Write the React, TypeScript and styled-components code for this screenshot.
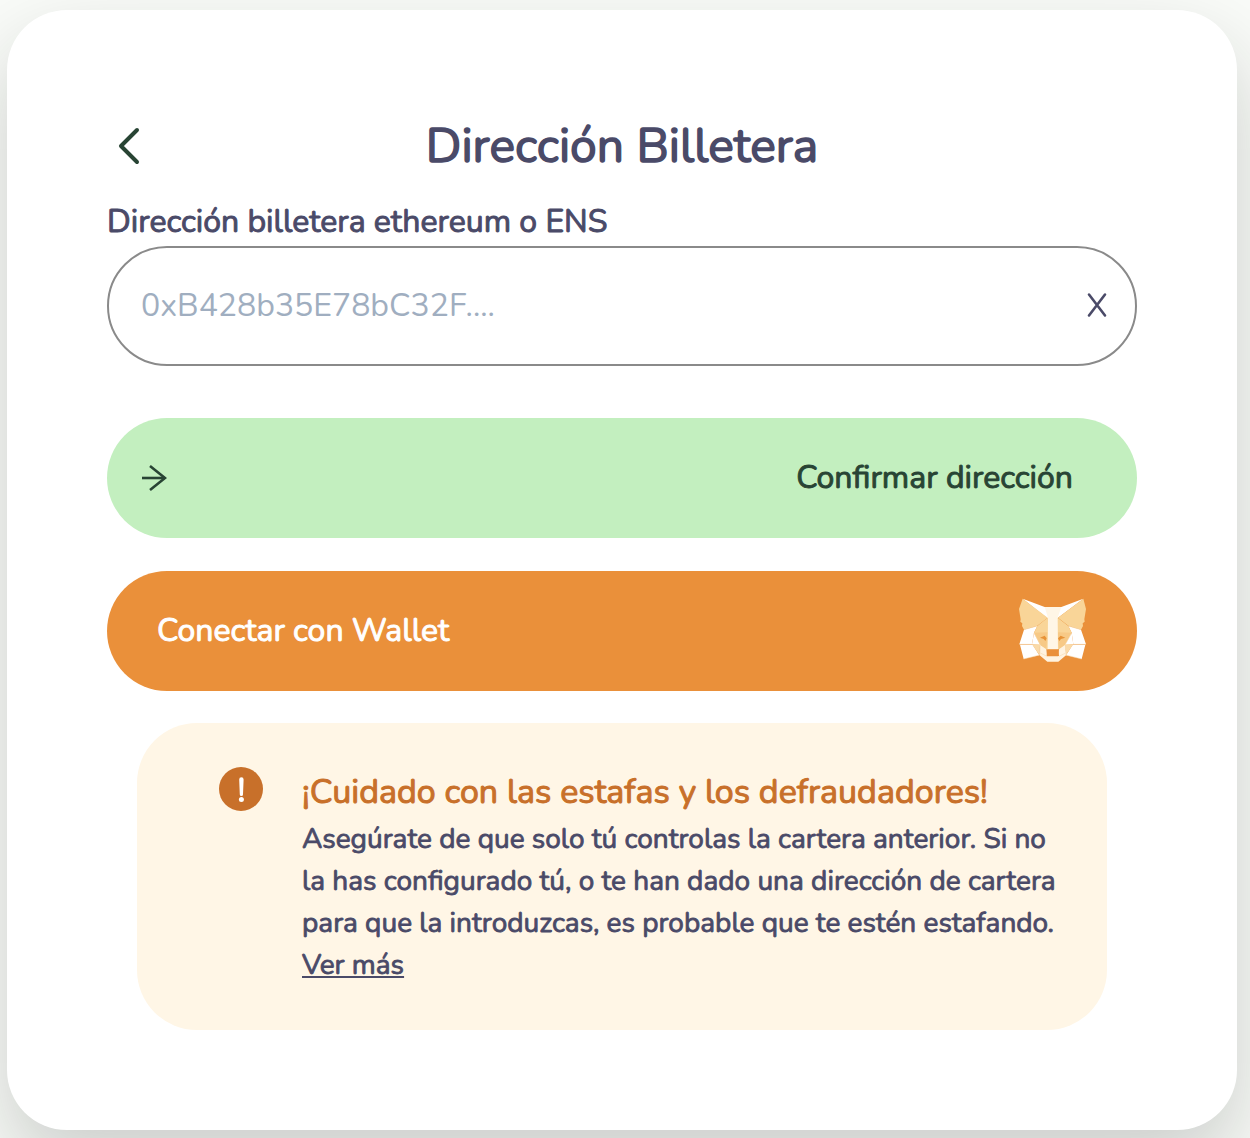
import React, { useState } from "react";
import styled, { createGlobalStyle } from "styled-components";

const GlobalStyle = createGlobalStyle`
  *, *::before, *::after { box-sizing: border-box; }
  body {
    margin: 0;
    background: #f9fbf8;
    color: #4a4a68;
    font-family: Nunito, Lato, "Open Sans", sans-serif;
    font-weight: 400;
  }
  button, input { font: inherit; }
`;

const textStroke = "0.03em currentColor";

const Page = styled.main`
  padding: 10px 13px 8px 7px;
  overflow: hidden;
`;

const Card = styled.section`
  padding: 100px;
  border-radius: 60px;
  background: #fff;
  box-shadow: 0 36px 80px rgba(24, 30, 24, 0.2);
`;

const Header = styled.header`
  display: grid;
  grid-template-columns: 44px 1fr 44px;
  align-items: center;
  height: 72px;
`;

const BackButton = styled.button`
  display: flex;
  justify-content: center;
  padding: 0;
  border: 0;
  background: none;
  color: #284434;
  cursor: pointer;
`;

const Title = styled.h1`
  margin: 0;
  font-size: 48px;
  line-height: 72px;
  font-weight: 400;
  text-align: center;
  -webkit-text-stroke: ${textStroke};
`;

const Form = styled.form`
  display: flex;
  flex-direction: column;
`;

const Label = styled.label`
  margin-top: 16px;
  font-size: 32px;
  line-height: 48px;
  -webkit-text-stroke: ${textStroke};
`;

const Field = styled.div`
  display: flex;
  align-items: center;
  height: 120px;
  padding: 0 28px 0 32px;
  border: 2px solid #8a8a8a;
  border-radius: 60px;
`;

const AddressInput = styled.input`
  flex: 1;
  min-width: 0;
  padding: 0;
  border: 0;
  outline: 0;
  background: none;
  color: #4a4a68;
  font-size: 32px;
  line-height: 48px;
  &::placeholder { color: #a0aec0; opacity: 1; }
`;

const ClearButton = styled.button`
  display: flex;
  padding: 0;
  border: 0;
  background: none;
  color: #4a4a68;
  cursor: pointer;
`;

const PillButton = styled.button<{ $tone: "confirm" | "wallet" }>`
  display: flex;
  align-items: center;
  justify-content: space-between;
  height: 120px;
  margin-top: ${(p) => (p.$tone === "confirm" ? "52px" : "33px")};
  padding: ${(p) => (p.$tone === "confirm" ? "0 64px 0 34px" : "0 50px")};
  border: 0;
  border-radius: 60px;
  background: ${(p) => (p.$tone === "confirm" ? "#c3efbf" : "#ea903a")};
  color: ${(p) => (p.$tone === "confirm" ? "#284434" : "#fff")};
  font-size: 32px;
  line-height: 48px;
  -webkit-text-stroke: ${textStroke};
  cursor: pointer;
`;

const Warning = styled.aside`
  display: flex;
  align-items: flex-start;
  gap: 39px;
  margin: 32px 30px 0;
  padding: 44px 48px 44px 82px;
  border-radius: 60px;
  background: #fff6e6;
`;

const WarningBody = styled.div`
  flex: 1;
`;

const WarningTitle = styled.h2`
  margin: 0;
  color: #c8702a;
  font-size: 34px;
  line-height: 50px;
  font-weight: 400;
  -webkit-text-stroke: ${textStroke};
`;

const WarningText = styled.p`
  margin: 1px 0 0;
  font-size: 28px;
  line-height: 42px;
  -webkit-text-stroke: ${textStroke};
`;

const MoreLink = styled.a`
  display: block;
  width: fit-content;
  color: inherit;
  text-decoration-thickness: 2px;
  text-underline-offset: 2px;
  text-decoration-skip-ink: none;
`;

const ChevronIcon = () => (
  <svg width="24" height="40" viewBox="0 0 24 40" fill="none" stroke="currentColor" strokeWidth="4" strokeLinecap="round" strokeLinejoin="round" aria-hidden="true">
    <path d="M20 4 4 20l16 16" />
  </svg>
);

const ArrowIcon = () => (
  <svg width="26" height="26" viewBox="0 0 26 26" fill="none" stroke="currentColor" strokeWidth="2.6" aria-hidden="true">
    <path d="M1 13h23" />
    <path d="M9 1 24 13 9 25" />
  </svg>
);

const CloseIcon = () => (
  <svg width="20" height="28" viewBox="0 0 20 28" fill="none" stroke="currentColor" strokeWidth="2.6" strokeLinecap="round" aria-hidden="true">
    <path d="M2 2.500 18 23.500M18 2.500 2 23.500" />
  </svg>
);

const AlertIcon = () => (
  <svg width="44" height="44" viewBox="0 0 44 44" aria-hidden="true">
    <circle cx="22" cy="22" r="22" fill="#c8702a" />
    <path d="M20.200 12.500a2.200 2.200 0 0 1 4.400 0l-.6 15a1.600 1.600 0 0 1-3.200 0z" fill="#fff" />
    <circle cx="22.400" cy="32.500" r="2.500" fill="#fff" />
  </svg>
);

const FoxIcon = () => (
  <svg width="69" height="66" viewBox="54 39 207 198" aria-hidden="true">
    <path d="M68 41 134 66h50l66-25-76 57-17 20-17-20z" fill="#fff" />
    <path d="M68 41 57 72l5 31-1 7 6 5-1 8 6 11 40-12 31-24zM250 41l8 31-5 31 1 7-6 5 1 8-6 11-38-12-31-24z" fill="#f9d598" />
    <path d="m72 134 40-11-10 20-6 35H58zM243 134l-38-11 10 20 5 35h38z" fill="#fff" />
    <path d="M60 179h38l20 32-47 11zM256 179h-38l-20 32 47 11z" fill="#fff" />
    <path d="m143 98-31 25-10 20 20 50h74l19-50-10-20-32-25z" fill="#f9d598" />
    <path d="m102 143 41-1-4 51-19-12zM215 143l-42-1 4 51 19-12z" fill="#f7c986" />
    <path d="m102 144-6 34 24 2zM215 144l5 34-25 2z" fill="#fff" />
    <path d="M96 178h24l-2 32zM220 178h-25l3 32z" fill="#fadaa8" />
    <path d="m120 180 19 13 2 21h34l2-21 18-13 4 30-24 20h-33l-24-20z" fill="#fff3e0" />
    <path d="M134 66h50l-11 32 1 96h-31l1-96z" fill="#fff6e6" />
    <path d="m120 158 14-6 6 8-4 8-5-6zM196 158l-14-6-8 8 4 8 5-6z" fill="#e79237" />
    <path d="M143 193h31l3 20h-37z" fill="#ea903a" />
    <path d="M58 178h38M220 178h38M72 134l40-11M243 134l-38-11M102 144l20 36M215 144l-20 36M118 210l-47 12M198 210l47 12M121 181l-2 29M196 181l2 29M121 204l20 10M197 204l-20 10" fill="none" stroke="#f5d4a6" strokeWidth="1.500" />
  </svg>
);

export default function App() {
  const [address, setAddress] = useState("");

  return (
    <>
      <GlobalStyle />
      <Page>
        <Card>
          <Header>
            <BackButton type="button" aria-label="Volver"><ChevronIcon /></BackButton>
            <Title>Dirección Billetera</Title>
          </Header>
          <Form onSubmit={(e) => e.preventDefault()}>
            <Label htmlFor="address">Dirección billetera ethereum o ENS</Label>
            <Field>
              <AddressInput
                id="address"
                type="text"
                placeholder="0xB428b35E78bC32F...."
                value={address}
                onChange={(e) => setAddress(e.target.value)}
              />
              <ClearButton type="button" aria-label="Borrar" onClick={() => setAddress("")}><CloseIcon /></ClearButton>
            </Field>
            <PillButton type="submit" $tone="confirm">
              <ArrowIcon />
              <span>Confirmar dirección</span>
            </PillButton>
            <PillButton type="button" $tone="wallet">
              <span>Conectar con Wallet</span>
              <FoxIcon />
            </PillButton>
          </Form>
          <Warning>
            <AlertIcon />
            <WarningBody>
              <WarningTitle>¡Cuidado con las estafas y los defraudadores!</WarningTitle>
              <WarningText>
                Asegúrate de que solo tú controlas la cartera anterior. Si no la has configurado tú, o te han dado una dirección de cartera para que la introduzcas, es probable que te estén estafando.
                <MoreLink href="#ver-mas">Ver más</MoreLink>
              </WarningText>
            </WarningBody>
          </Warning>
        </Card>
      </Page>
    </>
  );
}
